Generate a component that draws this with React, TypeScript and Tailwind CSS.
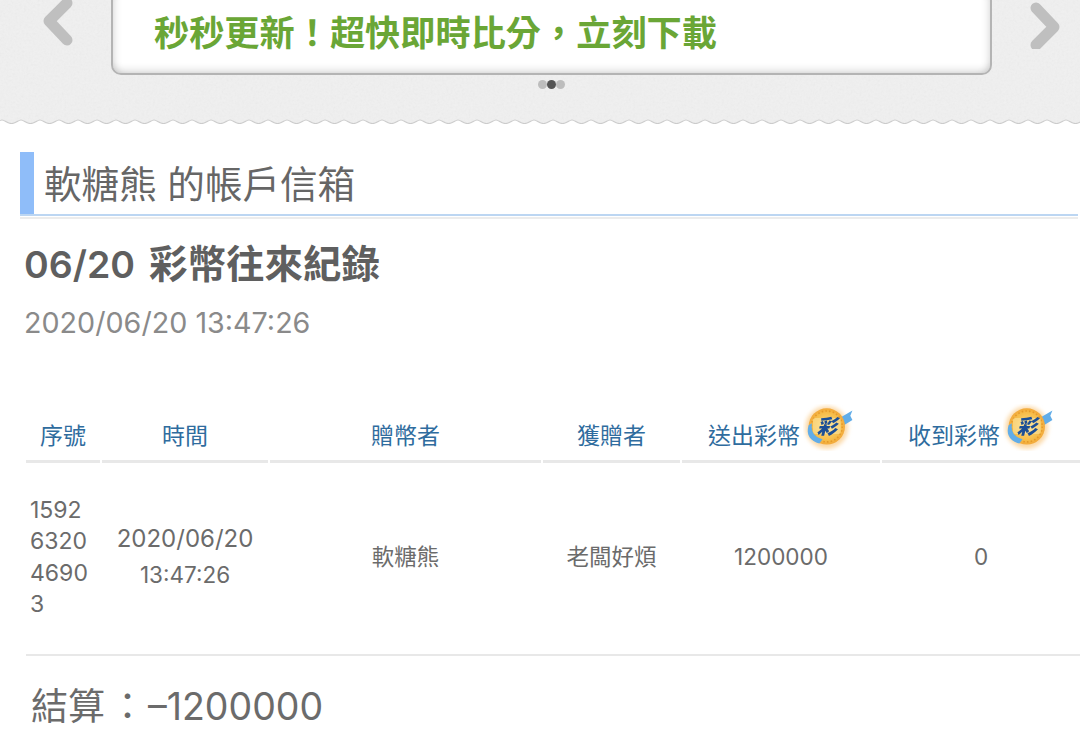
const font = "font-['Inter','Noto_Sans_CJK_TC',sans-serif]";

function Coin() {
  return (
    <svg width="54" height="47" viewBox="0 0 50 44" className="shrink-0">
      <defs>
        <radialGradient id="coinFill" cx="50%" cy="50%" r="50%">
          <stop offset="0%" stopColor="#fde08a" />
          <stop offset="75%" stopColor="#f6bd4a" />
          <stop offset="100%" stopColor="#f2a93a" />
        </radialGradient>
        <filter id="coinGlow" x="-30%" y="-30%" width="160%" height="160%">
          <feGaussianBlur stdDeviation="2" />
        </filter>
        <filter id="coinSoft">
          <feGaussianBlur stdDeviation="0.35" />
        </filter>
      </defs>
      <circle cx="22" cy="22" r="20" fill="#fbd9a8" filter="url(#coinGlow)" />
      <g filter="url(#coinSoft)">
        <path d="M36 12 L46 6 L44 11 L46 15 L38 20 Z" fill="#62ade8" />
        <circle cx="22" cy="21" r="17" fill="url(#coinFill)" />
        <circle cx="22" cy="21" r="14.5" fill="none" stroke="#e59a2c" strokeWidth="1.5" strokeDasharray="1.5 2" />
        <path d="M5 20 C2 29 7 35 15 37 L18 33 C11 31 7 27 8 18 Z" fill="#62ade8" />
        <rect x="9" y="13" width="26" height="15" rx="2" fill="#fbe7a6" opacity="0.55" />
        <text
          x="22"
          y="28"
          textAnchor="middle"
          fontSize="19"
          fontWeight="900"
          fontStyle="italic"
          fill="#1d4f96"
          fontFamily="'Noto Sans CJK TC', sans-serif"
        >
          彩
        </text>
      </g>
    </svg>
  );
}

function Chevron({ flip }: { flip?: boolean }) {
  return (
    <svg width="32" height="50" viewBox="0 0 32 50" className={flip ? "rotate-180" : ""}>
      <path d="M26 4 L8 22 L26 41" fill="none" stroke="#bfbfbf" strokeWidth="11" strokeLinecap="round" strokeLinejoin="round" />
    </svg>
  );
}

function Banner() {
  return (
    <section className="relative h-[124px] overflow-hidden bg-[#f0f0f0]">
      {/* paper grain */}
      <svg className="absolute inset-0 h-full w-full opacity-[0.08]">
        <filter id="grain">
          <feTurbulence type="fractalNoise" baseFrequency="0.45" numOctaves="2" seed="4" />
          <feColorMatrix type="saturate" values="0" />
        </filter>
        <rect width="100%" height="100%" filter="url(#grain)" />
      </svg>
      <div className="relative flex items-start">
        <div className="-mt-[1px] flex w-[111px] justify-end pr-[38px]">
          <Chevron />
        </div>
        <div className="-mt-[10px] flex h-[85px] w-[881px] items-center rounded-[10px] border-2 border-[#b4b4b4] bg-white pl-[41px] pt-[3px] shadow-[inset_0_-7px_9px_-5px_rgba(0,0,0,0.16),inset_-7px_0_9px_-6px_rgba(0,0,0,0.14),inset_7px_0_9px_-6px_rgba(0,0,0,0.14)]">
          <span className="text-[35.2px] font-bold leading-none text-[#6aa636]">
            秒秒更新！超快即時比分，立刻下載
          </span>
        </div>
        <div className="-mt-[1px] flex flex-1 pl-[38px]">
          <Chevron flip />
        </div>
      </div>
      <div className="relative mt-[5px] flex justify-center pl-[22px]">
        <span className="h-[9px] w-[9px] rounded-full bg-[#bdbdbd]" />
        <span className="h-[9px] w-[9px] rounded-full bg-[#555555]" />
        <span className="h-[9px] w-[9px] rounded-full bg-[#bdbdbd]" />
      </div>
      {/* scalloped edge */}
      <svg className="absolute bottom-0 left-0 h-[8px] w-full">
        <defs>
          <pattern id="scallop" width="19" height="8" patternUnits="userSpaceOnUse" x="2">
            <path d="M0 4 C3 4 5 7.5 9.5 7.5 C14 7.5 16 4 19 4 L19 8 L0 8 Z" fill="#ffffff" />
            <path d="M0 4 C3 4 5 7.5 9.5 7.5 C14 7.5 16 4 19 4" fill="none" stroke="#cccccc" strokeWidth="1.2" />
          </pattern>
        </defs>
        <rect width="100%" height="8" fill="url(#scallop)" />
      </svg>
    </section>
  );
}

const headCell = "flex h-[57px] items-center justify-center border-b-[3px] border-[#e8e8e8] pt-[6px] text-[23px] text-[#2f6c9e]";
const bodyCell = "flex items-center justify-center pb-[4px] text-center text-[22.5px] text-[#6b6b6b]";

function CoinTable() {
  return (
    <div className="ml-[26px] mt-[65px] grid w-[1054px] grid-cols-[74px_166px_271px_137px_198px_198px] gap-x-[2px]">
      <div className={headCell}>序號</div>
      <div className={headCell}>時間</div>
      <div className={headCell}>贈幣者</div>
      <div className={headCell}>獲贈者</div>
      <div className={headCell}>
        <span>送出彩幣</span>
        <span className="-mr-[3px] -mt-[18px] ml-[3px]"><Coin /></span>
      </div>
      <div className={headCell}>
        <span>收到彩幣</span>
        <span className="-mr-[3px] -mt-[18px] ml-[3px]"><Coin /></span>
      </div>
      <div className="col-span-6 grid h-[193px] grid-cols-[74px_166px_271px_137px_198px_198px] gap-x-[2px] border-b-[2px] border-[#e8e8e8]">
        <div className="flex flex-col justify-center pb-[2px] pl-[4px] text-[23px] leading-[31.5px] text-[#6b6b6b]">
          <span>1592</span>
          <span>6320</span>
          <span>4690</span>
          <span>3</span>
        </div>
        <div className={`${bodyCell} flex-col leading-[36px]`}>
          <span className="text-[24px]">2020/06/20</span>
          <span>13:47:26</span>
        </div>
        <div className={bodyCell}>軟糖熊</div>
        <div className={bodyCell}>老闆好煩</div>
        <div className={bodyCell}>1200000</div>
        <div className={bodyCell}>0</div>
      </div>
    </div>
  );
}

export default function App() {
  return (
    <div className={`${font} h-[752px] w-[1080px] overflow-hidden bg-white`}>
      <Banner />

      {/* Section title */}
      <div className="ml-[20px] mr-[2px] mt-[28px]">
        <div className="flex h-[64px] items-center border-b-[2px] border-[#bcd6f2]">
          <div className="h-full w-[14px] bg-[#8fbdf9]" />
          <h2 className="pl-[10px] pt-[3px] text-[37.6px] font-normal leading-none text-[#666666]">
            軟糖熊 的帳戶信箱
          </h2>
        </div>
        <div className="mt-[1px] h-[2px] bg-[#ececec]" />
      </div>

      <h1 className="ml-[24px] mt-[20px] flex items-baseline gap-[14px] leading-[50px] text-[#5f5f5f]">
        <span className="text-[37.5px] font-semibold">06/20</span>
        <span className="text-[38.5px] font-bold">彩幣往來紀錄</span>
      </h1>
      <p className="ml-[24px] mt-[15px] text-[28.7px] leading-[36px] text-[#8a8a8a]">2020/06/20 13:47:26</p>

      <CoinTable />

      <p className="ml-[31px] mt-[26px] flex text-[37px] leading-[50px] text-[#6b6b6b]">
        <span>結算</span>
        <span className="ml-[4px] mr-[2px]">：</span>
        <span className="text-[37.5px]">–1200000</span>
      </p>
    </div>
  );
}
